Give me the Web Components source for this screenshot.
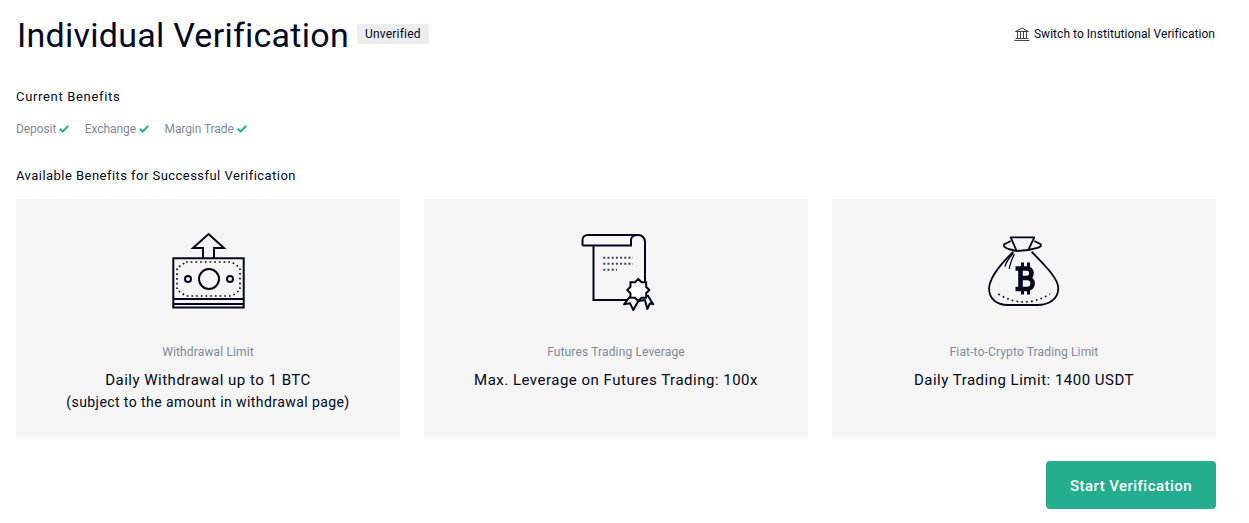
<!DOCTYPE html>
<html lang="en">
<head>
<meta charset="utf-8">
<title>Individual Verification</title>
<style>
  html, body { margin: 0; background: #fff; }
  body { font-family: Roboto, "Liberation Sans", sans-serif; color: #01081e; }
</style>
</head>
<body>
<verify-page></verify-page>

<script>
class VerifyHeader extends HTMLElement {
  constructor () {
    super()
    this.shadow = this.attachShadow({ mode: 'open' })
  }

  connectedCallback () {
    this.shadow.innerHTML =
      /* html */`
        <style>
          :host { display: flex; justify-content: space-between; align-items: flex-start; height: 71px; padding-right: 1px; }
          .left { display: flex; align-items: flex-start; padding: 6px 0 0 1px; }
          h1 { margin: 0; font-size: 34px; line-height: 42px; font-weight: 400; letter-spacing: 0.26px; }
          .tag {
            margin: 10px 0 0 8px; height: 20px; line-height: 20px; padding: 0 8px;
            background: #ebedef; border-radius: 2px; font-size: 12px; letter-spacing: 0.2px;
          }
          .switch { display: flex; align-items: center; gap: 4px; margin-top: 19px; font-size: 12px; letter-spacing: 0.04px; }
          svg { display: block; }
        </style>
        <div class="left"><h1>Individual Verification</h1><span class="tag">Unverified</span></div>
        <div class="switch">
          <svg width="16" height="14" viewBox="0 0 16 14" fill="none" stroke="#2b2f3c" stroke-width="0.9">
            <path d="M1.5 4.5 8 1 14.500 4.500ZM3.500 5v6.500M6.500 5v6.500M9.500 5v6.500M12.500 5v6.500M1.500 11.500h13M.5 13.500h15"/>
          </svg>
          <span>Switch to Institutional Verification</span>
        </div>
      `
  }
}

class BenefitTick extends HTMLElement {
  constructor () {
    super()
    this.shadow = this.attachShadow({ mode: 'open' })
  }

  connectedCallback () {
    this.shadow.innerHTML =
      /* html */`
        <style>
          :host { display: inline-flex; align-items: center; gap: 3px; font-size: 12px; letter-spacing: -0.08px; color: #7f8a9c; }
          svg { display: block; }
        </style>
        <slot></slot>
        <svg width="10" height="8" viewBox="0 0 10 8" fill="none" stroke="#24ae8f" stroke-width="2">
          <path d="M.8 3.8 3.6 6.5 9.2 1"/>
        </svg>
      `
  }
}

class BenefitCard extends HTMLElement {
  constructor () {
    super()
    this.shadow = this.attachShadow({ mode: 'open' })
  }

  connectedCallback () {
    this.shadow.innerHTML =
      /* html */`
        <style>
          :host { display: flex; flex-direction: column; align-items: center; height: 238px; background: #f5f5f5; text-align: center; }
          .icon { height: 144px; padding-top: 32px; box-sizing: border-box; }
          .label { font-size: 12px; line-height: 18px; letter-spacing: 0.14px; color: #7f8a9c; }
          .main { margin-top: 8px; font-size: 15px; line-height: 22px; letter-spacing: 0.5px; }
          .sub { font-size: 14px; line-height: 22px; letter-spacing: 0.42px; color: #01081e; }
        </style>
        <div class="icon"><slot name="icon"></slot></div>
        <div class="label"><slot name="label"></slot></div>
        <div class="main"><slot name="main"></slot></div>
        <div class="sub"><slot name="sub"></slot></div>
      `
  }
}

class VerifyPage extends HTMLElement {
  constructor () {
    super()
    this.shadow = this.attachShadow({ mode: 'open' })
  }

  connectedCallback () {
    this.shadow.innerHTML =
      /* html */`
        <style>
          :host { display: block; padding: 8px 33px 14px 16px; }
          h2 { margin: 0; font-size: 13px; line-height: 20px; font-weight: 400; }
          .current { margin-top: 8px; letter-spacing: 0.67px; }
          .ticks { display: flex; gap: 15.5px; margin-top: 13px; height: 18px; align-items: center; }
          .avail { margin-top: 28px; letter-spacing: 0.46px; }
          .cards { display: grid; grid-template-columns: repeat(3, 384px); gap: 24px; margin-top: 13px; }
          .foot { display: flex; justify-content: flex-end; margin-top: 24px; }
          button {
            width: 170px; height: 48px; padding: 2px 0 0; border: 0; border-radius: 4px; background: #24ae8f; color: #fff;
            font: 500 15px Roboto, sans-serif; letter-spacing: 0.45px;
          }
          svg { display: block; overflow: visible; }
        </style>
        <verify-header></verify-header>
        <h2 class="current">Current Benefits</h2>
        <div class="ticks">
          <benefit-tick>Deposit</benefit-tick>
          <benefit-tick>Exchange</benefit-tick>
          <benefit-tick>Margin Trade</benefit-tick>
        </div>
        <h2 class="avail">Available Benefits for Successful Verification</h2>
        <div class="cards">
          <benefit-card>
            <svg slot="icon" width="74" height="78" viewBox="0 0 74 78" fill="none" stroke="#01081e" stroke-width="2">
              <path d="M2.3 27.3V76.5H72.7V27.3ZM2.3 68H72.7M2.3 73H72.7"/>
              <path d="M32 27V17H22L37.5 3 53 17H43V27"/>
              <circle cx="38" cy="48" r="10"/>
              <circle cx="17" cy="48" r="3"/>
              <circle cx="59" cy="48" r="3"/>
              <path d="M15 31H61L69 37V59L61 65H15L6 59V37Z" stroke-width="1.6" stroke-dasharray="1.7 3"/>
            </svg>
            <span slot="label">Withdrawal Limit</span>
            <span slot="main">Daily Withdrawal up to 1 BTC</span>
            <span slot="sub">(subject to the amount in withdrawal page)</span>
          </benefit-card>
          <benefit-card>
            <svg slot="icon" width="72" height="78" viewBox="0 0 72 78" fill="none" stroke="#01081e" stroke-width="2">
              <path d="M2.5 14.5V9C2.5 6 5 4 8 4H58.5C62 4 65 7 65 11V56"/>
              <path d="M2.5 14.5H51V9C51 6 54 4 58 4M13.5 14.5V69H50"/>
              <path d="M23.3 26.7H53M23.3 32.7H53M23.3 38.7H37" stroke="#3d4354" stroke-dasharray="2 2.2"/>
              <path d="M50 65.7 44 73.3 50 72.3 53.3 79 58.3 70 65 69 67.3 78 70 72.3 73.3 73.3 67.3 64" fill="#fff" stroke-linejoin="round"/>
              <path d="M58.3 48 61.55 51.15 66.1 51.2 66.15 55.75 69.3 59 66.15 62.25 66.1 66.8 61.55 66.85 58.3 70 55.05 66.85 50.5 66.8 50.45 62.25 47.3 59 50.45 55.75 50.5 51.2 55.05 51.15Z" fill="#fff"/>
            </svg>
            <span slot="label">Futures Trading Leverage</span>
            <span slot="main">Max. Leverage on Futures Trading: 100x</span>
          </benefit-card>
          <benefit-card>
            <svg slot="icon" width="72" height="78" viewBox="0 0 72 78" fill="none" stroke="#01081e" stroke-width="1.8">
              <path d="M22.7 6.3H46.3L40.3 19 28.7 20Z" stroke-linejoin="round"/>
              <path d="M22.7 10 16.3 13.3C15 15 17 17 20.3 18L28.7 20M46.3 10 52.7 13.3C53.5 15 52 16 50.3 16.7L40.3 19" stroke-linejoin="round"/>
              <path d="M25.3 20.7C17 29 2 44 1 57 1 69 10 74 20 74H49C60 74 70.3 69 70.3 57 69.5 46 56 34 43.7 20.7"/>
              <path d="M25.3 22.3C22 26 18 30 17 35.7M26.3 23.3C24 28 22 32 21.3 38" stroke-width="1.3"/>
              <path d="M10.3 63Q36 79 62 63" stroke-width="1.6" stroke-dasharray="1.7 3.2"/>
              <path d="M27.5 37.5H39C45 37.500 45 47 39 47H32M39 47C46.500 47 46.500 58 39 58H27.500M32.500 37.500V58" stroke-width="4.600"/>
              <path d="M34.500 31.500V37M40.500 31.500V37M34.500 58V63.500M40.500 58V63.500" stroke-width="3"/>
            </svg>
            <span slot="label">Fiat-to-Crypto Trading Limit</span>
            <span slot="main">Daily Trading Limit: 1400 USDT</span>
          </benefit-card>
        </div>
        <div class="foot"><button>Start Verification</button></div>
      `
  }
}

customElements.define('verify-header', VerifyHeader)
customElements.define('benefit-tick', BenefitTick)
customElements.define('benefit-card', BenefitCard)
customElements.define('verify-page', VerifyPage)
</script>
</body>
</html>
